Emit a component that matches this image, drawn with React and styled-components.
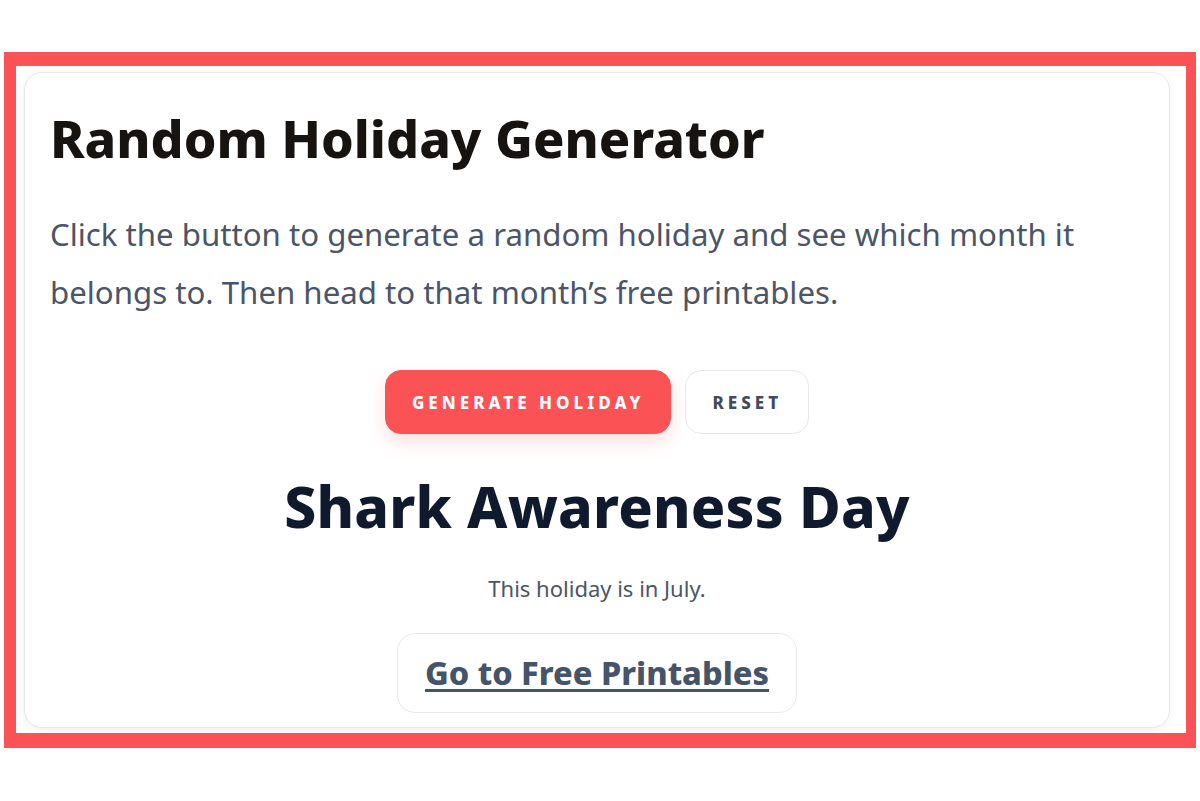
import React from "react";
import styled, { createGlobalStyle } from "styled-components";

const GlobalStyle = createGlobalStyle`
	html, body {
		margin: 0;
		padding: 0;
		background: #fff;
	}
	body {
		font-family: "Noto Sans", "Open Sans", Arial, sans-serif;
	}
`;

const App = () => {
	return (
		<>
			<GlobalStyle />
			<Frame>
				<Card>
					<Title>Random Holiday Generator</Title>
					<Intro>
						Click the button to generate a random holiday and see which month it
						belongs to. Then head to that month’s free printables.
					</Intro>
					<Actions>
						<Button $primary>Generate Holiday</Button>
						<Button>Reset</Button>
					</Actions>
					<Result>
						<HolidayName>Shark Awareness Day</HolidayName>
						<MonthNote>This holiday is in July.</MonthNote>
						<PrintLink href="javascript:void(0)">Go to Free Printables</PrintLink>
					</Result>
				</Card>
			</Frame>
		</>
	);
};

export default App;

const Frame = styled.div`
	box-sizing: border-box;
	width: 1192px;
	height: 696px;
	margin: 52px 0 0 4px;
	border-style: solid;
	border-color: #fa5255;
	border-width: 14px 10px 15px 12px;
	padding: 6px 16px 5px 8px;
	background: #fff;
	overflow: hidden;
`;

const Card = styled.div`
	box-sizing: border-box;
	height: 656px;
	border: 1px solid #e8e8e8;
	border-radius: 18px;
	background: #fff;
	box-shadow: 0 2px 10px rgba(0, 0, 0, 0.06);
	padding: 34px 25px 0;
	overflow: hidden;
`;

const Title = styled.h1`
	margin: 0;
	font-size: 52px;
	line-height: 1.2;
	font-weight: 800;
	color: #161310;
`;

const Intro = styled.p`
	margin: 36px 0 0;
	font-size: 31.2px;
	line-height: 58px;
	color: #4b5567;
`;

const Actions = styled.div`
	display: flex;
	justify-content: center;
	gap: 14px;
	margin-top: 49px;
`;

const Button = styled.button`
	box-sizing: border-box;
	height: 64px;
	padding: 0 ${(p) => (p.$primary ? "26px" : "26px")};
	border-radius: 16px;
	border: 1px solid ${(p) => (p.$primary ? "#fa5255" : "#e8e8e8")};
	background: ${(p) => (p.$primary ? "#fa5255" : "#fff")};
	color: ${(p) => (p.$primary ? "#fff" : "#3f4b5e")};
	box-shadow: ${(p) =>
		p.$primary ? "0 8px 18px rgba(250, 82, 85, 0.18)" : "none"};
	font-family: inherit;
	font-size: 17px;
	font-weight: 800;
	letter-spacing: 4px;
	text-transform: uppercase;
`;

const Result = styled.div`
	display: flex;
	flex-direction: column;
	align-items: center;
	text-align: center;
`;

const HolidayName = styled.h2`
	margin: 38px 0 0;
	font-size: 57px;
	line-height: 1.2;
	font-weight: 800;
	letter-spacing: 0.2px;
	color: #101a2e;
`;

const MonthNote = styled.p`
	margin: 32px 0 0;
	font-size: 22px;
	line-height: 1.4;
	color: #4b5567;
`;

const PrintLink = styled.a`
	box-sizing: border-box;
	display: flex;
	align-items: center;
	height: 80px;
	margin-top: 29px;
	padding: 0 27px;
	border: 1px solid #e8e8e8;
	border-radius: 18px;
	font-size: 32.5px;
	font-weight: 800;
	color: #46546a;
	text-decoration: underline;
	text-decoration-thickness: 3px;
	text-underline-offset: 4px;
`;
